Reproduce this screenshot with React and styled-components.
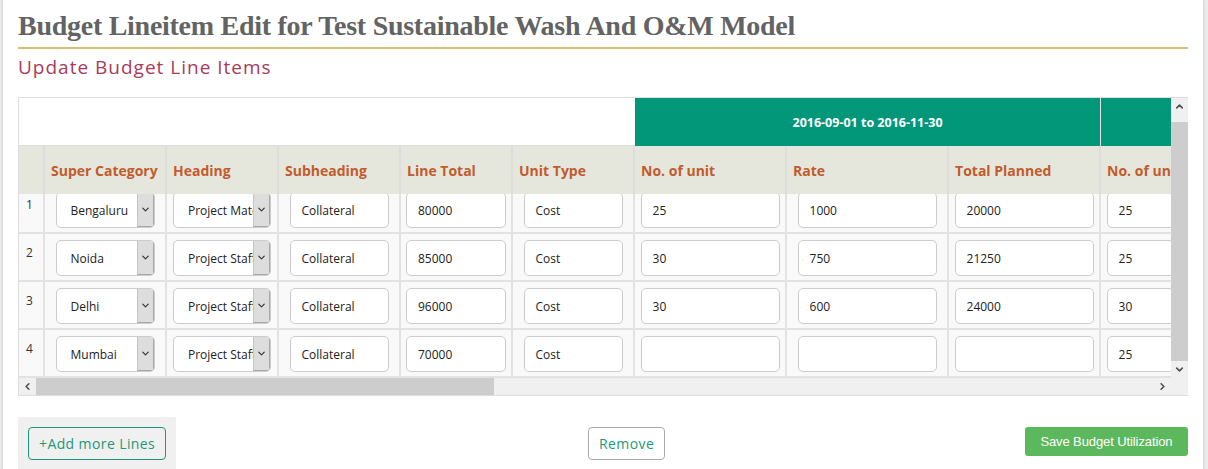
import React, { useLayoutEffect, useRef, useState } from 'react';
import styled, { createGlobalStyle } from 'styled-components';
import { ChevronDown, ChevronUp, ChevronLeft, ChevronRight } from 'lucide-react';

const GlobalStyle = createGlobalStyle`
  html, body { margin: 0; padding: 0; background: #ebebeb; }
  body { font-family: "Open Sans", "Liberation Sans", sans-serif; overflow: hidden; }
  * { box-sizing: border-box; }
`;

const Page = styled.div`
  margin: 0 5px 0 3px;
  min-height: 469px;
  background: #fff;
  padding: 9px 15px 0 15px;
  box-shadow: 0 0 3px rgba(0, 0, 0, 0.18);
`;

const Title = styled.h1`
  margin: 0;
  padding-bottom: 5px;
  border-bottom: 2px solid #d5c077;
  font-family: "Liberation Serif", "DejaVu Serif", serif;
  font-weight: bold;
  font-size: 28px;
  line-height: 33px;
  letter-spacing: -0.27px;
  color: #636363;
`;

const Subtitle = styled.h2`
  margin: 6px 0 18px;
  font-size: 19px;
  line-height: 24px;
  font-weight: 500;
  letter-spacing: 1px;
  color: #a83b5b;
`;

const Frame = styled.div`
  display: grid;
  grid-template-columns: 1fr 17px;
  grid-template-rows: 280px 17px;
  border: 1px solid #ddd;
  border-right: 0;
`;

const Viewport = styled.div`
  overflow: hidden;
`;

const Bar = styled.div`
  display: flex;
  flex-direction: ${(p) => (p.$vertical ? 'column' : 'row')};
  background: #f0f0f0;
`;

const Track = styled.div`
  flex: 1;
  display: flex;
  flex-direction: ${(p) => (p.$vertical ? 'column' : 'row')};
`;

const Thumb = styled.div`
  flex-shrink: 0;
  background: #cdcdcd;
`;

const Spacer = styled.div`
  flex-shrink: 0;
`;

const ArrowButton = styled.span`
  flex: none;
  display: flex;
  align-items: center;
  justify-content: center;
  width: 17px;
  height: 17px;
  color: #505050;
`;

const Corner = styled.div`
  background: #f0f0f0;
`;

const Table = styled.table`
  border-collapse: separate;
  border-spacing: 0;
  table-layout: fixed;
  width: 2810px;
`;

const BlankHead = styled.th`
  position: sticky;
  top: 0;
  z-index: 2;
  height: 48px;
  background: #fff;
  border-bottom: 1px solid #ddd;
`;

const GroupHead = styled.th`
  position: sticky;
  top: 0;
  z-index: 2;
  height: 48px;
  background: #03977a;
  border-right: 1px solid #e4e4e4;
  color: #fff;
  font-size: 12.5px;
  font-weight: 700;
  text-align: center;
`;

const ColHead = styled.th`
  position: sticky;
  top: 48px;
  z-index: 2;
  height: 48px;
  padding: 1px 6px 0;
  background: #e6e7dc;
  border-right: 2px solid #dddddb;
  color: #c25b2e;
  font-size: 14px;
  font-weight: 700;
  text-align: left;
  white-space: nowrap;
  overflow: hidden;
`;

const Cell = styled.td`
  height: 48px;
  padding: 6px 0 4px;
  background: #f9f9f9;
  border-right: 2px solid #e2e2e2;
  border-bottom: 2px solid #e2e2e2;
  text-align: center;
  vertical-align: top;
`;

const NumCell = styled(Cell)`
  padding: 10px 0 0 7px;
  text-align: left;
  font-size: 12px;
  color: #333;
`;

const Field = styled.input`
  width: ${(p) => p.$w}px;
  height: 36px;
  padding: 0 11px;
  border: 1px solid #ccc;
  border-radius: 5px;
  background: #fff;
  font-family: inherit;
  font-size: 12px;
  color: #222;
  outline: none;
`;

const SelectBox = styled.div`
  display: inline-flex;
  width: ${(p) => p.$w}px;
  height: 36px;
  border: 1px solid #ccc;
  border-radius: 5px;
  background: #fff;
  overflow: hidden;
  text-align: left;
`;

const NativeSelect = styled.select`
  flex: 1;
  min-width: 0;
  padding: 0 0 0 14px;
  border: 0;
  background: transparent;
  appearance: none;
  font-family: inherit;
  font-size: 12px;
  color: #222;
  outline: none;
`;

const SelectButton = styled.span`
  display: flex;
  align-items: center;
  justify-content: center;
  width: 17px;
  background: #ddd;
  border-left: 1px solid #c4c4c4;
  border-right: 1px solid #a8a8a8;
  border-bottom: 1px solid #a8a8a8;
  color: #333;
`;

const BottomBar = styled.div`
  display: grid;
  grid-template-columns: 570px auto 1fr;
  align-items: start;
  margin-top: 21px;
`;

const AddBox = styled.div`
  justify-self: start;
  padding: 10px;
  background: #f0f0f0;
`;

const OutlineButton = styled.button`
  height: 33px;
  padding: 0 10px;
  border: 1px solid ${(p) => p.$border};
  border-radius: 4px;
  background: ${(p) => p.$bg};
  color: #1d9878;
  font-family: inherit;
  font-size: 14px;
  letter-spacing: 0.4px;
`;

const RemoveWrap = styled.div`
  padding-top: 10px;
`;

const SaveButton = styled.button`
  justify-self: end;
  margin-top: 10px;
  height: 29px;
  padding: 0 15.5px;
  border: 0;
  border-radius: 3px;
  background: #5cb85c;
  color: #fff;
  font-family: "Liberation Sans Narrow", "Liberation Sans", sans-serif;
  font-size: 13px;
  letter-spacing: -0.1px;
`;

const baseCols = [26, 122, 112, 122, 112, 122];
const groupCols = [152, 162, 152];
const groups = [
  '2016-09-01 to 2016-11-30',
  '2016-12-01 to 2017-02-28',
  '2017-03-01 to 2017-05-31',
  '2017-06-01 to 2017-08-31',
];

const rows = [
  { cat: 'Bengaluru', head: 'Project Materials', total: '80000', g: [['25', '1000', '20000'], ['25', '1000', '20000'], ['30', '1000', '30000'], ['', '', '']] },
  { cat: 'Noida', head: 'Project Staff', total: '85000', g: [['30', '750', '21250'], ['25', '750', '18750'], ['30', '750', '22500'], ['', '', '']] },
  { cat: 'Delhi', head: 'Project Staff', total: '96000', g: [['30', '600', '24000'], ['30', '600', '18000'], ['30', '600', '18000'], ['', '', '']] },
  { cat: 'Mumbai', head: 'Project Staff', total: '70000', g: [['', '', ''], ['25', '800', '20000'], ['25', '800', '20000'], ['', '', '']] },
];

function Select({ w, value }) {
  return (
    <SelectBox $w={w}>
      <NativeSelect defaultValue={value}>
        <option>{value}</option>
      </NativeSelect>
      <SelectButton>
        <ChevronDown size={11} strokeWidth={2.5} />
      </SelectButton>
    </SelectBox>
  );
}

function ScrollBar({ vertical, size, offset }) {
  const Back = vertical ? ChevronUp : ChevronLeft;
  const Fwd = vertical ? ChevronDown : ChevronRight;
  const basis = (v) => ({ flexBasis: `${v * 100}%` });
  return (
    <Bar $vertical={vertical}>
      <ArrowButton><Back size={11} strokeWidth={3.5} /></ArrowButton>
      <Track $vertical={vertical}>
        <Spacer style={basis(offset)} />
        <Thumb style={basis(size)} />
      </Track>
      <ArrowButton><Fwd size={11} strokeWidth={3.5} /></ArrowButton>
    </Bar>
  );
}

export default function App() {
  const viewport = useRef(null);
  const [bars, setBars] = useState({ vs: 1, vo: 0, hs: 1, ho: 0 });

  useLayoutEffect(() => {
    const el = viewport.current;
    if (!el) return;
    el.scrollTop = el.scrollHeight;
    setBars({
      vs: el.clientHeight / el.scrollHeight,
      vo: el.scrollTop / el.scrollHeight,
      hs: el.clientWidth / el.scrollWidth,
      ho: el.scrollLeft / el.scrollWidth,
    });
  }, []);

  return (
    <>
      <GlobalStyle />
      <Page>
        <Title>Budget Lineitem Edit for Test Sustainable Wash And O&amp;M Model</Title>
        <Subtitle>Update Budget Line Items</Subtitle>

        <Frame>
          <Viewport ref={viewport}>
            <Table>
              <colgroup>
                {baseCols.map((w, i) => <col key={'b' + i} style={{ width: w }} />)}
                {groups.map((_, gi) => groupCols.map((w, i) => <col key={gi + '-' + i} style={{ width: w }} />))}
                <col style={{ width: 152 }} />
                <col style={{ width: 178 }} />
              </colgroup>
              <thead>
                <tr>
                  <BlankHead colSpan={6} />
                  {groups.map((g) => <GroupHead key={g} colSpan={3}>{g}</GroupHead>)}
                  <GroupHead colSpan={2} />
                </tr>
                <tr>
                  <ColHead />
                  <ColHead>Super Category</ColHead>
                  <ColHead>Heading</ColHead>
                  <ColHead>Subheading</ColHead>
                  <ColHead>Line Total</ColHead>
                  <ColHead>Unit Type</ColHead>
                  {groups.map((g) => (
                    <React.Fragment key={g}>
                      <ColHead>No. of unit</ColHead>
                      <ColHead>Rate</ColHead>
                      <ColHead>Total Planned</ColHead>
                    </React.Fragment>
                  ))}
                  <ColHead>Grand Total</ColHead>
                  <ColHead>Action</ColHead>
                </tr>
              </thead>
              <tbody>
                {rows.map((r, i) => (
                  <tr key={i}>
                    <NumCell>{i + 1}</NumCell>
                    <Cell><Select w={99} value={r.cat} /></Cell>
                    <Cell><Select w={98} value={r.head} /></Cell>
                    <Cell><Field $w={99} defaultValue="Collateral" /></Cell>
                    <Cell><Field $w={100} defaultValue={r.total} /></Cell>
                    <Cell><Field $w={99} defaultValue="Cost" /></Cell>
                    {r.g.map((vals, gi) => vals.map((v, vi) => (
                      <Cell key={gi + '-' + vi}><Field $w={139} defaultValue={v} /></Cell>
                    )))}
                    <Cell><Field $w={139} defaultValue={r.total} /></Cell>
                    <Cell />
                  </tr>
                ))}
              </tbody>
            </Table>
          </Viewport>
          <ScrollBar vertical size={bars.vs} offset={bars.vo} />
          <ScrollBar size={bars.hs} offset={bars.ho} />
          <Corner />
        </Frame>

        <BottomBar>
          <AddBox>
            <OutlineButton $border="#1d9878" $bg="transparent">+Add more Lines</OutlineButton>
          </AddBox>
          <RemoveWrap>
            <OutlineButton $border="#aaa" $bg="#fff">Remove</OutlineButton>
          </RemoveWrap>
          <SaveButton>Save Budget Utilization</SaveButton>
        </BottomBar>
      </Page>
    </>
  );
}
